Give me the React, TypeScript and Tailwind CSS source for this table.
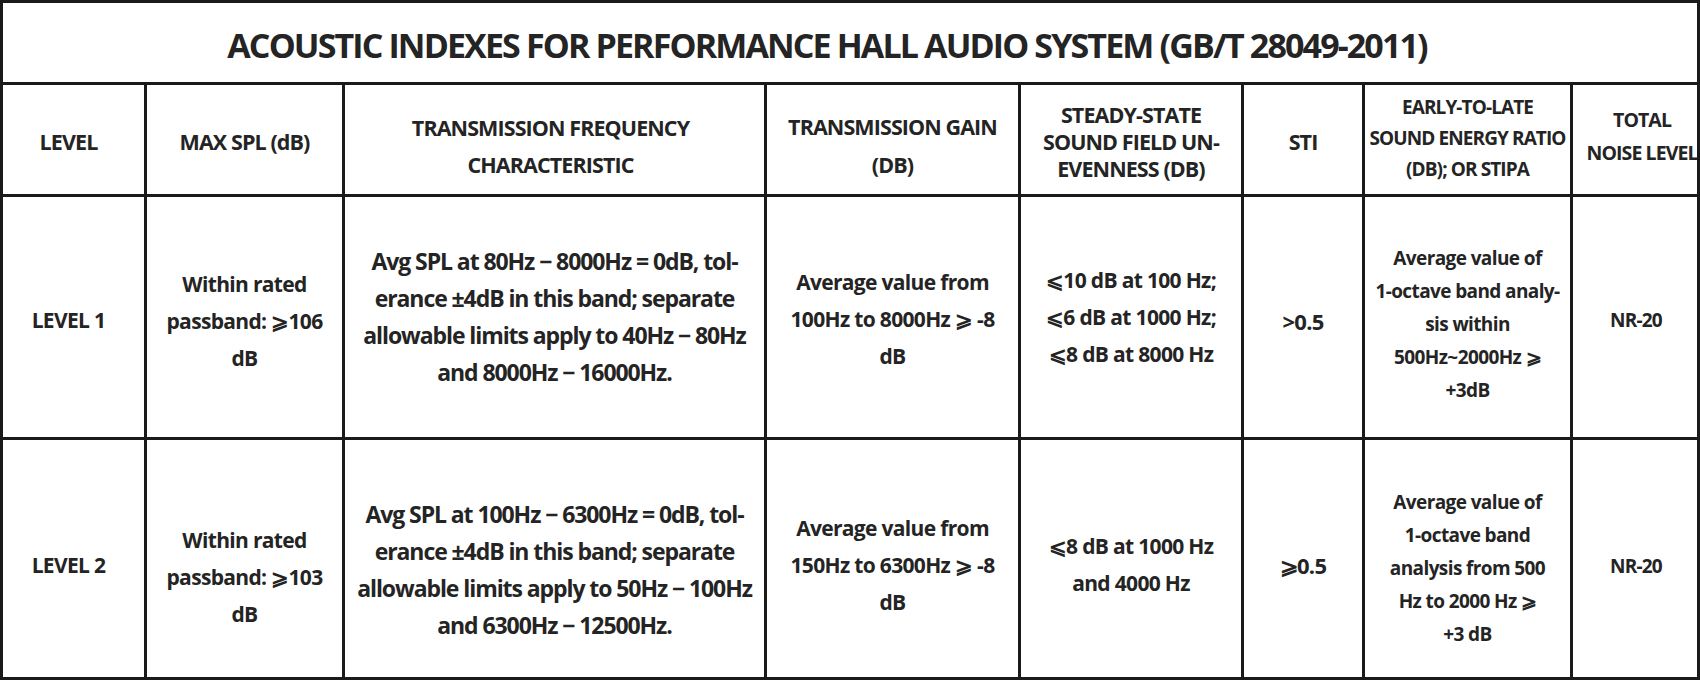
import React from "react";

type CellProps = {
  lines: string[];
  className?: string;
};

function Cell({ lines, className = "" }: CellProps) {
  return (
    <div
      className={`border-r-[3px] border-b-[3px] border-[#1a1a1a] flex flex-col items-center justify-center text-center overflow-hidden ${className}`}
    >
      {lines.map((l, i) => (
        <div key={i} className="whitespace-nowrap">
          {l}
        </div>
      ))}
    </div>
  );
}

export default function App() {
  const head = "text-[21.5px] tracking-[-0.042em]";
  const body = "text-[21px] leading-[37px] tracking-[-0.032em]";
  const big = "text-[23px] leading-[37px] tracking-[-0.047em]";
  const small = "text-[19px] leading-[33px] tracking-[-0.032em]";
  return (
    <div className="w-[1700px] h-[680px] bg-white font-['Open_Sans',sans-serif] font-bold text-[#242424]">
      <div className="w-[1700px] h-[680px] border-l-[3px] border-t-[3px] border-[#1a1a1a] flex flex-col">
        <div className="h-[82px] shrink-0 border-r-[3px] border-b-[3px] border-[#1a1a1a] flex items-center justify-center pt-[5px] pr-[46px] text-[34px] leading-none tracking-[-0.055em] whitespace-nowrap">
          ACOUSTIC INDEXES FOR PERFORMANCE HALL AUDIO SYSTEM (GB/T 28049-2011)
        </div>
        <div className="grid grid-cols-[144px_198px_422px_254px_223px_121px_208px_127px] grid-rows-[112px_243px_240px]">
          {/* header */}
          <Cell className={`${head} pt-[6px] pr-[10px]`} lines={["LEVEL"]} />
          <Cell className={`${head} pt-[6px]`} lines={["MAX SPL (dB)"]} />
          <Cell className={`${head} leading-[37px] pt-[12px] pr-[8px]`} lines={["TRANSMISSION FREQUENCY", "CHARACTERISTIC"]} />
          <Cell className={`${head} leading-[38px] pt-[12px]`} lines={["TRANSMISSION GAIN", "(DB)"]} />
          <Cell className={`${head} leading-[27px] pt-[4px]`} lines={["STEADY-STATE", "SOUND FIELD UN-", "EVENNESS (DB)"]} />
          <Cell className={`${head} pt-[6px]`} lines={["STI"]} />
          <Cell className="text-[19px] leading-[31px] tracking-[-0.047em] pb-[2px]" lines={["EARLY-TO-LATE", "SOUND ENERGY RATIO", "(DB); OR STIPA"]} />
          <Cell className="text-[19.5px] leading-[33px] tracking-[-0.047em] pb-[8px] pl-[14px]" lines={["TOTAL", "NOISE LEVEL"]} />

          {/* level 1 */}
          <Cell className="text-[21px] tracking-[-0.032em] pt-[8px] pr-[10px]" lines={["LEVEL 1"]} />
          <Cell className={`${body} pt-[8px]`} lines={["Within rated", "passband: ⩾106", "dB"]} />
          <Cell className={`${big}`} lines={["Avg SPL at 80Hz − 8000Hz = 0dB, tol-", "erance ±4dB in this band; separate", "allowable limits apply to 40Hz − 80Hz", "and 8000Hz − 16000Hz."]} />
          <Cell className={`${body} pt-[4px]`} lines={["Average value from", "100Hz to 8000Hz ⩾ -8", "dB"]} />
          <Cell className={`${body}`} lines={["⩽10 dB at 100 Hz;", "⩽6 dB at 1000 Hz;", "⩽8 dB at 8000 Hz"]} />
          <Cell className="text-[22px] tracking-[-0.032em] pt-[8px]" lines={[">0.5"]} />
          <Cell className={`${small} pt-[14px]`} lines={["Average value of", "1-octave band analy-", "sis within", "500Hz~2000Hz ⩾", "+3dB"]} />
          <Cell className="text-[19px] tracking-[-0.042em] pt-[6px] pl-[2px]" lines={["NR-20"]} />

          {/* level 2 */}
          <Cell className="text-[21px] tracking-[-0.032em] pt-[14px] pr-[10px]" lines={["LEVEL 2"]} />
          <Cell className={`${body} pt-[38px]`} lines={["Within rated", "passband: ⩾103", "dB"]} />
          <Cell className={`${big} pt-[22px]`} lines={["Avg SPL at 100Hz − 6300Hz = 0dB, tol-", "erance ±4dB in this band; separate", "allowable limits apply to 50Hz − 100Hz", "and 6300Hz − 12500Hz."]} />
          <Cell className={`${body} pt-[14px]`} lines={["Average value from", "150Hz to 6300Hz ⩾ -8", "dB"]} />
          <Cell className={`${body} pt-[12px]`} lines={["⩽8 dB at 1000 Hz", "and 4000 Hz"]} />
          <Cell className="text-[22px] tracking-[-0.032em] pt-[14px]" lines={["⩾0.5"]} />
          <Cell className={`${small} pt-[20px]`} lines={["Average value of", "1-octave band", "analysis from 500", "Hz to 2000 Hz ⩾", "+3 dB"]} />
          <Cell className="text-[19px] tracking-[-0.042em] pt-[16px] pl-[2px]" lines={["NR-20"]} />
        </div>
      </div>
    </div>
  );
}
